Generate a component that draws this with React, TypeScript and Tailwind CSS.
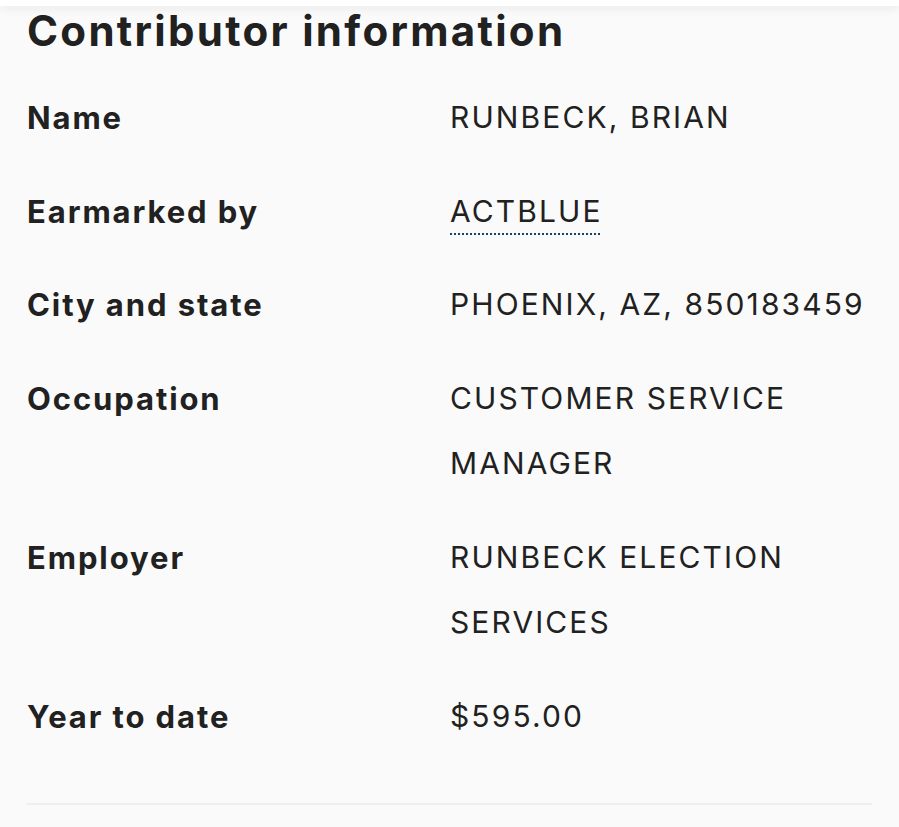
import React from "react";

const rows: { label: string; value: string[]; link?: boolean }[] = [
  { label: "Name", value: ["RUNBECK, BRIAN"] },
  { label: "Earmarked by", value: ["ACTBLUE"], link: true },
  { label: "City and state", value: ["PHOENIX, AZ, 850183459"] },
  { label: "Occupation", value: ["CUSTOMER SERVICE", "MANAGER"] },
  { label: "Employer", value: ["RUNBECK ELECTION", "SERVICES"] },
  { label: "Year to date", value: ["$595.00"] },
];

export default function App() {
  return (
    <div
      className="w-[899px] h-[827px] overflow-hidden bg-[#fafafa] text-[#212121]"
      style={{ fontFamily: "Inter, 'Liberation Sans', sans-serif" }}
    >
      <div className="relative h-[6px] bg-white shadow-[0_3px_8px_rgba(0,0,0,0.07)]" />
      <div className="px-[27px]">
        <h2 className="mt-[1px] text-[42px] leading-[48px] font-bold tracking-[2.3px]">
          Contributor information
        </h2>
        <div className="mt-[30px]">
          {rows.map((r) => (
            <div key={r.label} className="grid grid-cols-[423px_1fr] pb-[28px]">
              <div className="text-[31px] leading-[65.5px] font-bold tracking-[1.9px]">{r.label}</div>
              <div className="text-[30px] leading-[65.5px] font-normal tracking-[2.1px]">
                {r.value.map((v) => (
                  <div key={v}>
                    {r.link ? (
                      <span className="underline decoration-dotted decoration-[#1b3f6b] decoration-2 underline-offset-[12px]">
                        {v}
                      </span>
                    ) : (
                      v
                    )}
                  </div>
                ))}
              </div>
            </div>
          ))}
        </div>
        <div className="mt-[26px] h-[2px] bg-[#efefef]" />
      </div>
    </div>
  );
}
